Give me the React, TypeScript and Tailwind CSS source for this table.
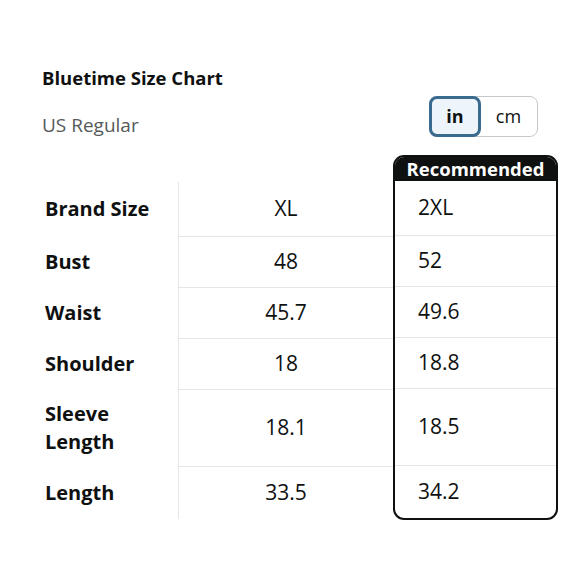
import { FC } from "react"

type Row = { label: string; cur: string; rec: string; h: string }

const rows: Row[] = [
  { label: "Brand Size", cur: "XL", rec: "2XL", h: "h-[54px]" },
  { label: "Bust", cur: "48", rec: "52", h: "h-[51px]" },
  { label: "Waist", cur: "45.7", rec: "49.6", h: "h-[51px]" },
  { label: "Shoulder", cur: "18", rec: "18.8", h: "h-[51px]" },
  { label: "Sleeve Length", cur: "18.1", rec: "18.5", h: "h-[77px]" },
  { label: "Length", cur: "33.5", rec: "34.2", h: "h-[53px]" },
]

const UnitToggle: FC = () => {
  return (
    <div className="flex h-[41px] w-[109px] rounded-[8px] border border-[#c6c9cc] bg-white">
      <div className="-m-px flex w-[52px] items-center justify-center rounded-[8px] border-[3px] border-[#3b6a8f] bg-[#edf5fa] text-[18px] font-bold text-[#0f1111]">
        in
      </div>
      <div className="flex flex-1 items-center justify-center text-[18px] text-[#0f1111]">cm</div>
    </div>
  )
}

export default function App() {
  return (
    <div className="h-[580px] w-[580px] bg-white text-[#0f1111]" style={{ fontFamily: '"Open Sans", "Noto Sans", sans-serif' }}>
      <div className="px-[42px] pt-[65px]">
        <h1 className="text-[18.5px] font-bold leading-[26px]">Bluetime Size Chart</h1>
        <div className="mt-[5px] flex items-start justify-between">
          <p className="mt-[17px] text-[19px] leading-[24px] text-[#565959]">US Regular</p>
          <UnitToggle />
        </div>
      </div>

      <div className="mt-[18px] flex pl-[42px] pr-[22px]">
        <div className="w-[136px] pl-[3px] pt-[27px]">
          {rows.map((r) => (
            <div key={r.label} className={`${r.h} flex items-center text-[20px] font-bold leading-[28px]`}>
              <span className={r.label === "Sleeve Length" ? "w-[80px]" : ""}>{r.label}</span>
            </div>
          ))}
        </div>

        <div className="w-[215px] pt-[27px]">
          <div className="border-l border-[#e6e6e6]">
            {rows.map((r, i) => (
              <div
                key={r.label}
                className={`${r.h} flex items-center justify-center text-[21px] ${i > 0 ? "border-t border-[#e6e6e6]" : ""}`}
              >
                {r.cur}
              </div>
            ))}
          </div>
        </div>

        <div className="flex-1 overflow-hidden rounded-[11px] border-[2.5px] border-[#0f1111]">
          <div className="flex h-[24px] items-center justify-center bg-[#0f1111] text-[18.5px] font-bold text-white">
            Recommended
          </div>
          {rows.map((r, i) => (
            <div
              key={r.label}
              className={`${r.h} flex items-center pl-[23px] text-[21px] ${i > 0 ? "border-t border-[#e6e6e6]" : ""}`}
            >
              {r.rec}
            </div>
          ))}
        </div>
      </div>
    </div>
  )
}
